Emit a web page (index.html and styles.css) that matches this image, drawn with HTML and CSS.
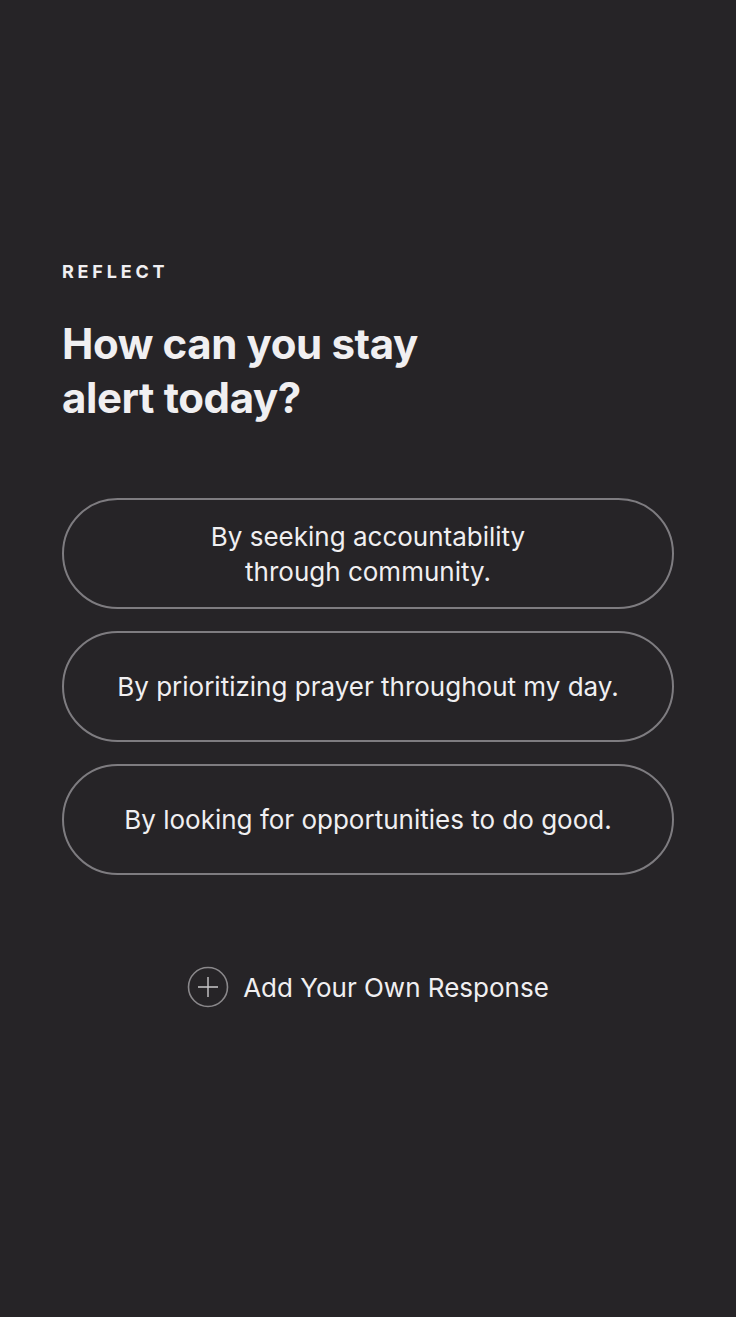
FILE: index.html
```html
<!DOCTYPE html>
<html lang="en">
<head>
    <meta charset="UTF-8">
    <meta name="viewport" content="width=device-width, initial-scale=1.0">
    <title>Reflect</title>
    <link rel="stylesheet" href="styles.css">
</head>
<body>
    <div class="container">
        <div class="eyebrow">REFLECT</div>
        <h1>How can you stay<br>alert today?</h1>
        <div class="options">
            <button class="option">By seeking accountability<br>through community.</button>
            <button class="option">By prioritizing prayer throughout my day.</button>
            <button class="option">By looking for opportunities to do good.</button>
        </div>
        <button class="add">
            <svg class="add-icon" width="42" height="42" viewBox="0 0 42 42">
                <circle cx="21" cy="21" r="19.5" fill="none" stroke="#8a888b" stroke-width="1.6"/>
                <path d="M21 11v20M11 21h20" stroke="#c9c8ca" stroke-width="1.4" fill="none"/>
            </svg>
            <span>Add Your Own Response</span>
        </button>
    </div>
</body>
</html>
```

FILE: styles.css
```css
body {
    margin: 0;
    background: #262427;
    font-family: 'Inter', sans-serif;
    color: #f0eff1;
    height: 100vh;
}
.container {
    padding: 262px 62px 0 62px;
}
.eyebrow {
    font-size: 18px;
    font-weight: 700;
    letter-spacing: 3.8px;
    line-height: 20px;
}
h1 {
    font-size: 42px;
    font-weight: 700;
    line-height: 54px;
    margin: 35px 0 0 0;
    letter-spacing: -0.4px;
}
.options {
    margin-top: 73px;
    display: flex;
    flex-direction: column;
    gap: 22px;
}
.option {
    height: 111px;
    border: 2px solid #7e7c80;
    border-radius: 56px;
    background: transparent;
    color: #f0eff1;
    font-family: 'Inter', sans-serif;
    font-size: 26px;
    line-height: 35px;
    letter-spacing: 0;
    text-align: center;
    padding: 0;
}
.add {
    margin: 91px auto 0 auto;
    display: flex;
    align-items: center;
    gap: 14px;
    background: none;
    border: none;
    color: #f0eff1;
    font-family: 'Inter', sans-serif;
    font-size: 26px;
    padding: 0;
}
.add-icon {
    display: block;
}
```
